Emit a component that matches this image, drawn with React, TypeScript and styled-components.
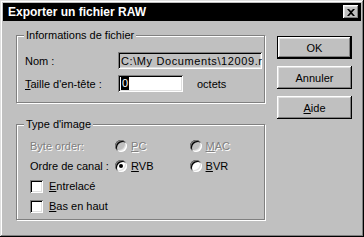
import styled, { createGlobalStyle } from "styled-components";

const GlobalStyle = createGlobalStyle`
  html, body {
    margin: 0;
    padding: 0;
    background: #fff;
  }
  body {
    font-family: "Liberation Sans", Arial, sans-serif;
    font-size: 11px;
    color: #000;
  }
`;

const Window = styled.div`
  width: 364px;
  height: 237px;
  box-sizing: border-box;
  padding: 3px;
  background: #c0c0c0;
  box-shadow: inset -1px -1px #000, inset 1px 1px #dfdfdf,
    inset -2px -2px #808080, inset 2px 2px #fff;
  display: flex;
  flex-direction: column;
`;

const TitleBar = styled.div`
  height: 18px;
  background: #000;
  color: #fff;
  display: flex;
  align-items: center;
  justify-content: space-between;
  padding: 0 2px 0 5px;
`;

const Title = styled.span`
  font-weight: bold;
  font-size: 12px;
`;

const CloseButton = styled.div`
  width: 16px;
  height: 14px;
  box-sizing: border-box;
  background: #c0c0c0;
  box-shadow: inset -1px -1px #000, inset 1px 1px #fff,
    inset -2px -2px #808080, inset 2px 2px #dfdfdf;
  display: flex;
  align-items: center;
  justify-content: center;
`;

const Body = styled.div`
  display: flex;
  gap: 12px;
  padding: 8px 9px 0 13px;
`;

const LeftColumn = styled.div`
  display: flex;
  flex-direction: column;
  gap: 15px;
`;

const RightColumn = styled.div`
  display: flex;
  flex-direction: column;
  gap: 7px;
  padding-top: 7px;
`;

const Group = styled.fieldset`
  margin: 0;
  padding: 0;
  width: 249px;
  box-sizing: border-box;
  min-width: 0;
  border: 1px solid #808080;
  box-shadow: 1px 1px 0 #fff, inset 1px 1px 0 #fff;
`;

const Legend = styled.legend`
  margin-left: 7px;
  padding: 0 2px;
  line-height: 13px;
  background: #c0c0c0;
`;

const FileGrid = styled.div`
  display: grid;
  grid-template-columns: 93px 1fr;
  row-gap: 6px;
  align-items: center;
  padding: 10px 2px 10px 8px;
`;

const Label = styled.span<{ $disabled?: boolean }>`
  white-space: nowrap;
  color: ${(p) => (p.$disabled ? "#808080" : "#000")};
  text-shadow: ${(p) => (p.$disabled ? "1px 1px 0 #fff" : "none")};
`;

const Field = styled.div<{ $readOnly?: boolean; $width?: number }>`
  height: 17px;
  box-sizing: border-box;
  width: ${(p) => (p.$width ? `${p.$width}px` : "100%")};
  background: ${(p) => (p.$readOnly ? "#c0c0c0" : "#fff")};
  box-shadow: inset 1px 1px #808080, inset -1px -1px #fff,
    inset 2px 2px #000, inset -2px -2px #dfdfdf;
  padding: 0 3px;
  letter-spacing: ${(p) => (p.$readOnly ? "0.6px" : "0")};
  display: flex;
  align-items: center;
  overflow: hidden;
  white-space: nowrap;
`;

const Selected = styled.span`
  background: #000;
  color: #fff;
  line-height: 13px;
  padding: 0 1px;
`;

const InlineRow = styled.div`
  display: flex;
  align-items: center;
  gap: 14px;
`;

const TypeBody = styled.div`
  display: flex;
  flex-direction: column;
  gap: 4px;
  padding: 7px 0 5px 13px;
`;

const OptionRow = styled.div`
  display: flex;
  align-items: center;
  height: 16px;
`;

const RowLabel = styled(Label)`
  width: 88px;
`;

const Option = styled.div`
  width: 77px;
  display: flex;
  align-items: center;
  gap: 4px;
`;

const Radio = styled.span<{ $checked?: boolean; $disabled?: boolean }>`
  position: relative;
  width: 12px;
  height: 12px;
  border-radius: 50%;
  box-sizing: border-box;
  background: ${(p) => (p.$disabled ? "#c0c0c0" : "#fff")};
  box-shadow: inset 1px 1px #808080, inset -1px -1px #fff,
    inset 2px 2px #000, inset -2px -2px #dfdfdf;
  &::after {
    content: "";
    display: ${(p) => (p.$checked ? "block" : "none")};
    position: absolute;
    left: 4px;
    top: 4px;
    width: 4px;
    height: 4px;
    border-radius: 50%;
    background: #000;
  }
`;

const Check = styled.span`
  width: 13px;
  height: 13px;
  box-sizing: border-box;
  background: #fff;
  box-shadow: inset 1px 1px #808080, inset -1px -1px #fff,
    inset 2px 2px #000, inset -2px -2px #dfdfdf;
`;

const CheckRow = styled.div`
  display: flex;
  align-items: center;
  gap: 6px;
  height: 16px;
`;

const Button = styled.div<{ $default?: boolean }>`
  width: 75px;
  height: 23px;
  box-sizing: border-box;
  display: flex;
  align-items: center;
  justify-content: center;
  background: #c0c0c0;
  box-shadow: ${(p) =>
    p.$default
      ? "inset 0 0 0 1px #000, inset -2px -2px #000, inset 2px 2px #fff, inset -3px -3px #808080, inset 3px 3px #dfdfdf"
      : "inset -1px -1px #000, inset 1px 1px #fff, inset -2px -2px #808080, inset 2px 2px #dfdfdf"};
`;

const U = styled.span`
  text-decoration: underline;
`;

const App = () => {
  return (
    <>
      <GlobalStyle />
      <Window>
        <TitleBar>
          <Title>Exporter un fichier RAW</Title>
          <CloseButton>
            <svg width="8" height="7" viewBox="0 0 8 7">
              <path d="M0 0h2l2 2 2-2h2L5 3.5 8 7H6L4 5 2 7H0l3-3.5z" fill="#000" />
            </svg>
          </CloseButton>
        </TitleBar>
        <Body>
          <LeftColumn>
            <Group>
              <Legend>Informations de fichier</Legend>
              <FileGrid>
                <Label>Nom :</Label>
                <Field $readOnly>C:\My Documents\12009.raw</Field>
                <Label>
                  <U>T</U>aille d'en-tête :
                </Label>
                <InlineRow>
                  <Field $width={65}>
                    <Selected>0</Selected>
                  </Field>
                  <Label>octets</Label>
                </InlineRow>
              </FileGrid>
            </Group>
            <Group>
              <Legend>Type d'image</Legend>
              <TypeBody>
                <OptionRow>
                  <RowLabel $disabled>Byte order:</RowLabel>
                  <Option>
                    <Radio $disabled />
                    <Label $disabled>
                      <U>P</U>C
                    </Label>
                  </Option>
                  <Option>
                    <Radio $disabled />
                    <Label $disabled>
                      <U>M</U>AC
                    </Label>
                  </Option>
                </OptionRow>
                <OptionRow>
                  <RowLabel>Ordre de canal :</RowLabel>
                  <Option>
                    <Radio $checked />
                    <Label>
                      <U>R</U>VB
                    </Label>
                  </Option>
                  <Option>
                    <Radio />
                    <Label>
                      <U>B</U>VR
                    </Label>
                  </Option>
                </OptionRow>
                <CheckRow>
                  <Check />
                  <Label>
                    <U>E</U>ntrelacé
                  </Label>
                </CheckRow>
                <CheckRow>
                  <Check />
                  <Label>
                    <U>B</U>as en haut
                  </Label>
                </CheckRow>
              </TypeBody>
            </Group>
          </LeftColumn>
          <RightColumn>
            <Button $default>OK</Button>
            <Button>Annuler</Button>
            <Button>
              <U>A</U>ide
            </Button>
          </RightColumn>
        </Body>
      </Window>
    </>
  );
};

export default App;
